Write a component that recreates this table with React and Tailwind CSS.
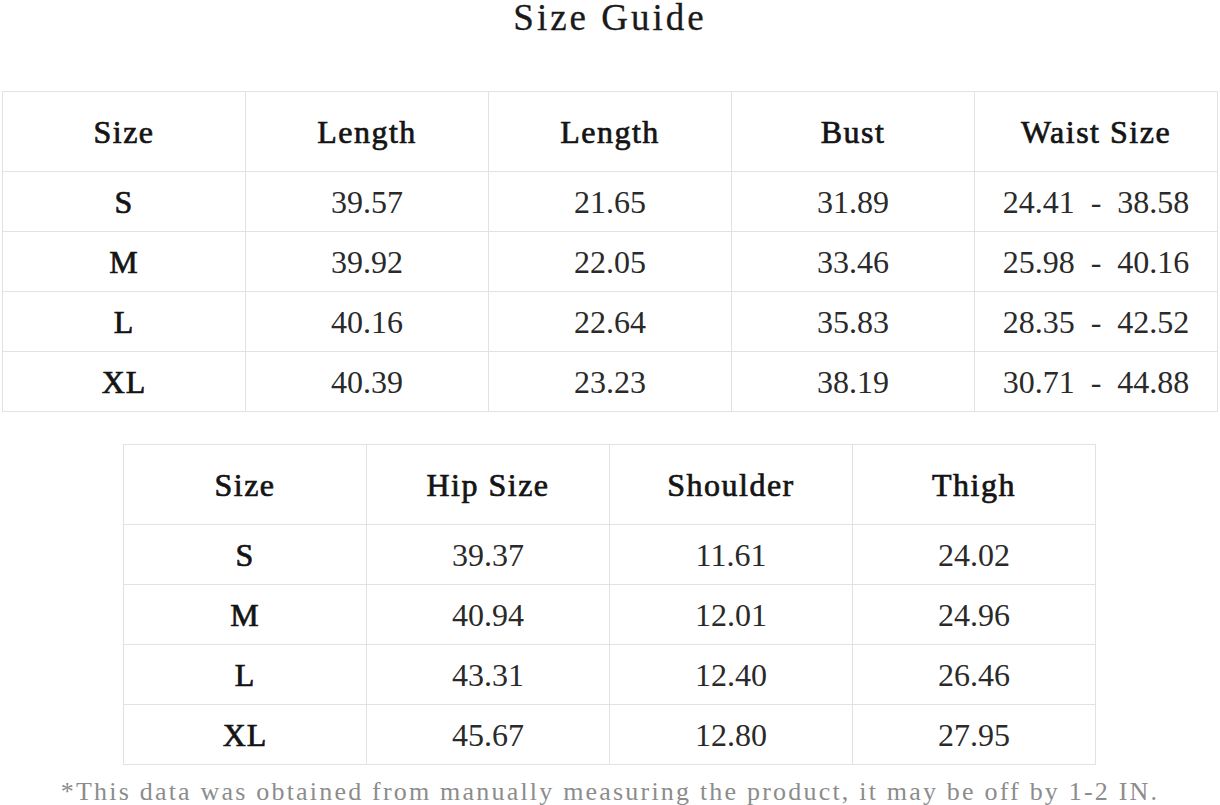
import React from 'react';

const font = { fontFamily: '"Liberation Serif", "Noto Sans CJK SC", serif' };

const topHeaders = ['Size', 'Length', 'Length', 'Bust', 'Waist Size'];
const topRows = [
  ['S', '39.57', '21.65', '31.89', ['24.41', '38.58']],
  ['M', '39.92', '22.05', '33.46', ['25.98', '40.16']],
  ['L', '40.16', '22.64', '35.83', ['28.35', '42.52']],
  ['XL', '40.39', '23.23', '38.19', ['30.71', '44.88']],
];

const bottomHeaders = ['Size', 'Hip Size', 'Shoulder', 'Thigh'];
const bottomRows = [
  ['S', '39.37', '11.61', '24.02'],
  ['M', '40.94', '12.01', '24.96'],
  ['L', '43.31', '12.40', '26.46'],
  ['XL', '45.67', '12.80', '27.95'],
];

// faux-bold like the original's thickened headers
const strong = 'text-[#141414] [-webkit-text-stroke:0.7px_#141414]';

const Cell = ({ children, head, label }) => (
  <div
    className={`flex items-center justify-center border-r border-b border-[#e2e2e2] text-[32px] ${
      head ? `h-[80px] tracking-[1.5px] ${strong}` : 'h-[60px]'
    } ${label ? `tracking-[1px] ${strong}` : ''} ${!head && !label ? 'text-[#2a2a2a]' : ''}`}
  >
    {Array.isArray(children) ? (
      <span>
        {children[0]}
        <span className="px-[16px]">-</span>
        {children[1]}
      </span>
    ) : (
      children
    )}
  </div>
);

const SizeTable = ({ headers, rows, className }) => (
  <div
    className={`grid border-t border-l border-[#e2e2e2] ${className}`}
    style={{ gridTemplateColumns: `repeat(${headers.length}, 243px)` }}
  >
    {headers.map((h, i) => (
      <Cell key={`h${i}`} head>
        {h}
      </Cell>
    ))}
    {rows.map((row, r) =>
      row.map((value, c) => (
        <Cell key={`${r}-${c}`} label={c === 0}>
          {value}
        </Cell>
      ))
    )}
  </div>
);

export default function App() {
  return (
    <div className="w-[1220px] h-[805px] bg-white overflow-hidden" style={font}>
      {/* Title */}
      <div className="h-[91px]">
        <div className="text-center text-[37px] leading-[35px] tracking-[3px] text-[#1a1a1a] [-webkit-text-stroke:0.3px_#1a1a1a]">
          Size Guide
        </div>
      </div>

      <SizeTable headers={topHeaders} rows={topRows} className="ml-[2px] w-[1216px]" />

      <SizeTable headers={bottomHeaders} rows={bottomRows} className="ml-[123px] mt-[32px] w-[973px]" />

      {/* Note */}
      <div className="mt-[12px] text-center text-[26px] leading-[30px] tracking-[2.2px] text-[#8c8c8c]">
        *This data was obtained from manually measuring the product, it may be off by 1-2 IN.
      </div>
    </div>
  );
}
